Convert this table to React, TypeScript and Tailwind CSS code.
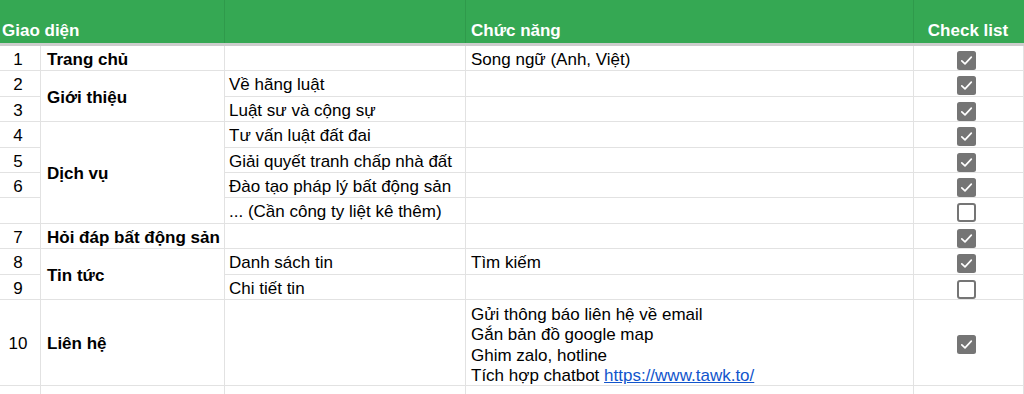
import React from "react";

function Box({ checked }: { checked: boolean }) {
  return checked ? (
    <svg width="19" height="19" viewBox="0 0 19 19">
      <rect x="0" y="0" width="19" height="19" rx="2.5" fill="#757575" />
      <path d="M4.8 9.8 L8 12.8 L14.3 6.2" stroke="#fff" strokeWidth="1.7" fill="none" strokeLinecap="round" strokeLinejoin="round" />
    </svg>
  ) : (
    <svg width="19" height="19" viewBox="0 0 19 19">
      <rect x="1" y="1" width="17" height="17" rx="2" fill="#fff" stroke="#757575" strokeWidth="2" />
    </svg>
  );
}

const cell = "border-r border-b border-[#e2e2e2] flex items-center pt-[4px] overflow-hidden whitespace-nowrap";

export default function App() {
  return (
    <div className="w-[1024px] h-[394px] overflow-hidden bg-white text-black font-['Liberation_Sans',Arial,sans-serif] text-[17px] leading-[20.5px]">
      <div className="grid grid-cols-[225px_241px_448px_110px] h-[43px] bg-[#35a853] text-white font-bold">
        <div className="border-r border-[#2f9a4b] flex items-end pb-[2px] pl-[2px]">Giao diện</div>
        <div className="border-r border-[#2f9a4b]"></div>
        <div className="border-r border-[#2f9a4b] flex items-end pb-[2px] pl-[5px]">Chức năng</div>
        <div className="flex items-end justify-center pb-[2px] pr-[2px]">Check list</div>
      </div>
      <div className="h-[3px] bg-[#cdcdcd]"></div>
      <div className="grid grid-cols-[41px_184px_241px_448px_110px] grid-rows-[25px_26px_25px_26px_25px_25px_26px_25px_26px_25px_86px_20px]">
        {/* row 1 */}
        <div className={`${cell} justify-center pr-[4px] col-start-1 row-start-1`}>1</div>
        <div className={`${cell} pl-[6px] font-bold col-start-2 row-start-1`}>Trang chủ</div>
        <div className={`${cell} col-start-3 row-start-1`}></div>
        <div className={`${cell} pl-[5px] col-start-4 row-start-1`}>Song ngữ (Anh, Việt)</div>
        <div className={`${cell} justify-center pr-[4px] col-start-5 row-start-1`}><Box checked /></div>

        {/* rows 2-3 */}
        <div className={`${cell} justify-center pr-[4px] col-start-1 row-start-2`}>2</div>
        <div className={`${cell} pl-[6px] font-bold col-start-2 row-start-2 row-span-2`}>Giới thiệu</div>
        <div className={`${cell} pl-[4px] col-start-3 row-start-2`}>Về hãng luật</div>
        <div className={`${cell} col-start-4 row-start-2`}></div>
        <div className={`${cell} justify-center pr-[4px] col-start-5 row-start-2`}><Box checked /></div>

        <div className={`${cell} justify-center pr-[4px] col-start-1 row-start-3`}>3</div>
        <div className={`${cell} pl-[4px] col-start-3 row-start-3`}>Luật sư và cộng sự</div>
        <div className={`${cell} col-start-4 row-start-3`}></div>
        <div className={`${cell} justify-center pr-[4px] col-start-5 row-start-3`}><Box checked /></div>

        {/* rows 4-7 */}
        <div className={`${cell} justify-center pr-[4px] col-start-1 row-start-4`}>4</div>
        <div className={`${cell} pl-[6px] font-bold col-start-2 row-start-4 row-span-4`}>Dịch vụ</div>
        <div className={`${cell} pl-[4px] col-start-3 row-start-4`}>Tư vấn luật đất đai</div>
        <div className={`${cell} col-start-4 row-start-4`}></div>
        <div className={`${cell} justify-center pr-[4px] col-start-5 row-start-4`}><Box checked /></div>

        <div className={`${cell} justify-center pr-[4px] col-start-1 row-start-5`}>5</div>
        <div className={`${cell} pl-[4px] col-start-3 row-start-5`}>Giải quyết tranh chấp nhà đất</div>
        <div className={`${cell} col-start-4 row-start-5`}></div>
        <div className={`${cell} justify-center pr-[4px] col-start-5 row-start-5`}><Box checked /></div>

        <div className={`${cell} justify-center pr-[4px] col-start-1 row-start-6`}>6</div>
        <div className={`${cell} pl-[4px] col-start-3 row-start-6`}>Đào tạo pháp lý bất động sản</div>
        <div className={`${cell} col-start-4 row-start-6`}></div>
        <div className={`${cell} justify-center pr-[4px] col-start-5 row-start-6`}><Box checked /></div>

        <div className={`${cell} col-start-1 row-start-7`}></div>
        <div className={`${cell} pl-[4px] col-start-3 row-start-7`}>... (Cần công ty liệt kê thêm)</div>
        <div className={`${cell} col-start-4 row-start-7`}></div>
        <div className={`${cell} justify-center pr-[4px] col-start-5 row-start-7`}><Box checked={false} /></div>

        {/* row 8 */}
        <div className={`${cell} justify-center pr-[4px] col-start-1 row-start-8`}>7</div>
        <div className={`${cell} pl-[6px] font-bold col-start-2 row-start-8`}>Hỏi đáp bất động sản</div>
        <div className={`${cell} col-start-3 row-start-8`}></div>
        <div className={`${cell} col-start-4 row-start-8`}></div>
        <div className={`${cell} justify-center pr-[4px] col-start-5 row-start-8`}><Box checked /></div>

        {/* rows 9-10 */}
        <div className={`${cell} justify-center pr-[4px] col-start-1 row-start-9`}>8</div>
        <div className={`${cell} pl-[6px] font-bold col-start-2 row-start-9 row-span-2`}>Tin tức</div>
        <div className={`${cell} pl-[4px] col-start-3 row-start-9`}>Danh sách tin</div>
        <div className={`${cell} pl-[5px] col-start-4 row-start-9`}>Tìm kiếm</div>
        <div className={`${cell} justify-center pr-[4px] col-start-5 row-start-9`}><Box checked /></div>

        <div className={`${cell} justify-center pr-[4px] col-start-1 row-start-10`}>9</div>
        <div className={`${cell} pl-[4px] col-start-3 row-start-10`}>Chi tiết tin</div>
        <div className={`${cell} col-start-4 row-start-10`}></div>
        <div className={`${cell} justify-center pr-[4px] col-start-5 row-start-10`}><Box checked={false} /></div>

        {/* row 11 */}
        <div className={`${cell} justify-center pr-[4px] col-start-1 row-start-11`}>10</div>
        <div className={`${cell} pl-[6px] font-bold col-start-2 row-start-11`}>Liên hệ</div>
        <div className={`${cell} col-start-3 row-start-11`}></div>
        <div className={`${cell} pl-[5px] !pt-[6px] col-start-4 row-start-11`}>
          <div className="flex flex-col">
            <span>Gửi thông báo liên hệ về email</span>
            <span>Gắn bản đồ google map</span>
            <span>Ghim zalo, hotline</span>
            <span>
              Tích hợp chatbot <span className="text-[#1155cc] underline">https://www.tawk.to/</span>
            </span>
          </div>
        </div>
        <div className={`${cell} justify-center pr-[4px] col-start-5 row-start-11`}><Box checked /></div>

        {/* row 12 */}
        <div className={`${cell} col-start-1 row-start-12`}></div>
        <div className={`${cell} col-start-2 row-start-12`}></div>
        <div className={`${cell} col-start-3 row-start-12`}></div>
        <div className={`${cell} col-start-4 row-start-12`}></div>
        <div className={`${cell} col-start-5 row-start-12`}></div>
      </div>
    </div>
  );
}
